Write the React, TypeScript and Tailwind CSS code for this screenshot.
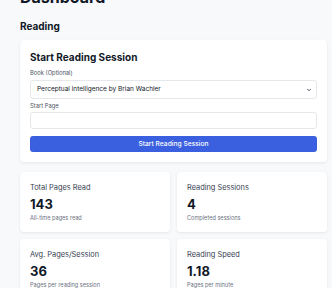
import { ChevronDown } from "lucide-react";

const stats = [
  { label: "Total Pages Read", value: "143", note: "All-time pages read" },
  { label: "Reading Sessions", value: "4", note: "Completed sessions" },
  { label: "Avg. Pages/Session", value: "36", note: "Pages per reading session" },
  { label: "Reading Speed", value: "1.18", note: "Pages per minute" },
];

export default function App() {
  return (
    <div
      className="h-[288px] overflow-hidden bg-[#f8f9fb] pl-5 pr-[5px] text-[#111827]"
      style={{ fontFamily: "Inter, 'Noto Sans', sans-serif" }}
    >
      <h1 className="-mt-[13px] text-[16px] font-bold leading-[20px]">Dashboard</h1>

      <h2 className="mt-[12px] text-[10px] font-bold leading-[14px]">Reading</h2>

      <div className="mt-[7px] rounded-[4px] bg-white px-[10px] pb-[10px] pt-[10px] shadow-[0_1px_3px_rgba(0,0,0,0.08)]">
        <h3 className="text-[10px] font-bold leading-[14px]">Start Reading Session</h3>

        <div className="mt-[5px] text-[5.8px] leading-[8px] text-[#4b5563]">Book (Optional)</div>
        <div className="mt-[3px] flex h-[19px] items-center justify-between rounded-[3px] border border-[#e5e7eb] pl-[6px] pr-[4px]">
          <span className="text-[6.5px] text-[#111827]">Perceptual intelligence by Brian Wachler</span>
          <ChevronDown className="h-[6px] w-[6px] text-[#374151]" strokeWidth={3.5} />
        </div>

        <div className="mt-[2px] text-[5.8px] leading-[9px] text-[#4b5563]">Start Page</div>
        <div className="mt-[2px] h-[17px] rounded-[3px] border border-[#e5e7eb]" />

        <button className="mt-[7px] flex h-[16px] w-full items-center justify-center rounded-[3px] bg-[#3a60e0] text-[6.7px] font-medium text-white">
          Start Reading Session
        </button>
      </div>

      <div className="mt-[10px] grid grid-cols-2 gap-[7px]">
        {stats.map((s) => (
          <div
            key={s.label}
            className="h-[60px] rounded-[4px] bg-white px-[10px] pt-[10px] shadow-[0_1px_3px_rgba(0,0,0,0.08)]"
          >
            <div className="text-[7.4px] leading-[11px] text-[#374151]">{s.label}</div>
            <div className="mt-[3px] text-[13px] font-bold leading-[16px]">{s.value}</div>
            <div className="mt-[2px] text-[5.6px] leading-[8px] text-[#6b7280]">{s.note}</div>
          </div>
        ))}
      </div>
    </div>
  );
}
